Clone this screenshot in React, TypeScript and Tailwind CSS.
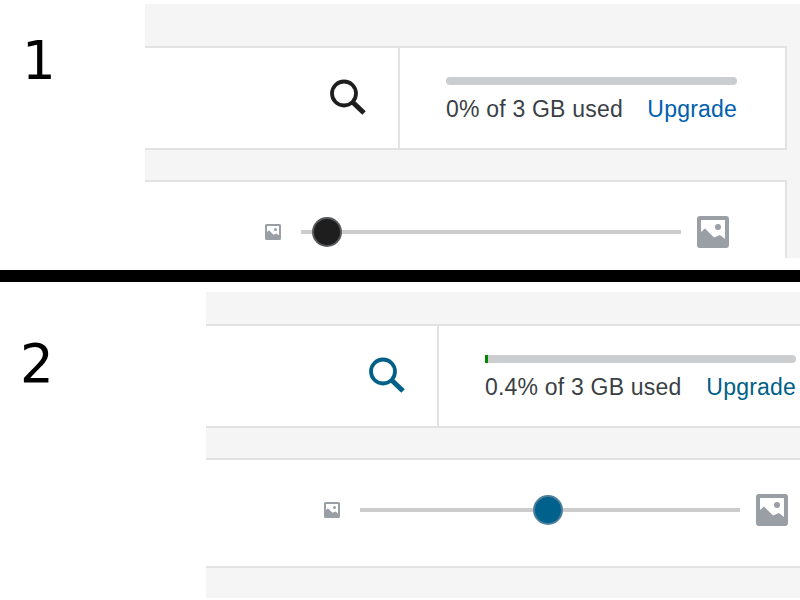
import React from "react";

function SearchIcon({ color }: { color: string }) {
  return (
    <svg width="38" height="38" viewBox="0 0 38 38" fill="none" className="shrink-0">
      <circle cx="15" cy="14.5" r="12" stroke={color} strokeWidth="3.8" />
      <path d="M23.5 23L35 34" stroke={color} strokeWidth="5" />
    </svg>
  );
}

function ImageIcon({ size }: { size: number }) {
  return (
    <svg width={size} height={size} viewBox="0 0 32 32" className="shrink-0">
      <path
        fillRule="evenodd"
        fill="#9a9ea5"
        d="M3 0H29A3 3 0 0 1 32 3V29A3 3 0 0 1 29 32H3A3 3 0 0 1 0 29V3A3 3 0 0 1 3 0ZM4 4V16L8 12.5L17 21.5L23 19L28 23V4ZM18 11A3 3 0 1 0 24 11A3 3 0 1 0 18 11Z"
      />
    </svg>
  );
}

function Slider({ knob, color, ring }: { knob: string; color: string; ring: string }) {
  return (
    <div className="flex items-center">
      <ImageIcon size={16} />
      <div className="relative ml-[20px] mr-[16px] h-[4px] w-[380px] bg-[#cccccc]">
        {knob === "left" ? (
          <div
            className="absolute left-[11px] top-[-13px] h-[30px] w-[30px] rounded-full border-2"
            style={{ backgroundColor: color, borderColor: ring }}
          />
        ) : (
          <div
            className="absolute left-[173px] top-[-13px] h-[30px] w-[30px] rounded-full border-2"
            style={{ backgroundColor: color, borderColor: ring }}
          />
        )}
      </div>
      <ImageIcon size={32} />
    </div>
  );
}

const font = { fontFamily: '"Liberation Sans", Arial, sans-serif' };
const labelFont = { fontFamily: '"DejaVu Sans", sans-serif' };

export default function App() {
  return (
    <div className="flex h-[600px] w-[800px] flex-col overflow-hidden bg-white" style={font}>
      <section className="flex h-[270px] pt-[4px]">
        <div className="w-[145px] pl-[22px] pt-[23px] text-[53px] leading-[68px] text-black" style={labelFont}>
          1
        </div>
        <div className="h-[254px] flex-1 bg-[#f5f5f5] pt-[42px]">
          <div className="mr-[13px] flex h-[104px] border-y-2 border-r-2 border-[#e2e2e2] bg-white">
            <div className="flex w-[255px] items-center justify-end border-r-2 border-[#e2e2e2] pr-[31px]">
              <SearchIcon color="#1e1e1e" />
            </div>
            <div className="flex-1 pl-[46px] pt-[29px]">
              <div className="h-[8px] w-[291px] rounded-full bg-[#cccdcf]" />
              <div className="mt-[10px] flex w-[291px] items-center justify-between whitespace-nowrap text-[23px] leading-[28px] tracking-[0.2px]">
                <span className="text-[#3a3f45]">0% of 3 GB used</span>
                <span className="text-[#0060b0]">Upgrade</span>
              </div>
            </div>
          </div>
          <div className="mr-[13px] mt-[30px] flex h-[78px] items-start justify-end border-r-2 border-t-2 border-[#e2e2e2] bg-white pr-[56px] pt-[34px]">
            <Slider knob="left" color="#1e1e1e" ring="#55585c" />
          </div>
        </div>
      </section>
      <div className="h-[12px] bg-black" />
      <section className="flex h-[318px] pt-[10px]">
        <div className="w-[206px] pl-[20px] pt-[38px] text-[53px] leading-[68px] text-black" style={labelFont}>
          2
        </div>
        <div className="h-[306px] flex-1 bg-[#f5f5f5] pt-[32px]">
          <div className="flex h-[104px] border-y-2 border-[#e2e2e2] bg-white">
            <div className="flex w-[233px] items-center justify-end border-r-2 border-[#e2e2e2] pr-[31px]">
              <SearchIcon color="#006088" />
            </div>
            <div className="flex-1 pl-[46px] pt-[29px]">
              <div className="h-[8px] w-[311px] overflow-hidden rounded-r-full rounded-l-[1px] bg-[#cccdcf]">
                <div className="h-full w-[3px] bg-[#008a00]" />
              </div>
              <div className="mt-[10px] flex w-[311px] items-center justify-between whitespace-nowrap text-[23px] leading-[28px] tracking-[0.2px]">
                <span className="text-[#3a3f45]">0.4% of 3 GB used</span>
                <span className="text-[#006088]">Upgrade</span>
              </div>
            </div>
          </div>
          <div className="mt-[30px] flex h-[110px] items-start justify-end border-y-2 border-[#e2e2e2] bg-white pr-[12px] pt-[34px]">
            <Slider knob="mid" color="#00618c" ring="#4d7f9c" />
          </div>
        </div>
      </section>
    </div>
  );
}
